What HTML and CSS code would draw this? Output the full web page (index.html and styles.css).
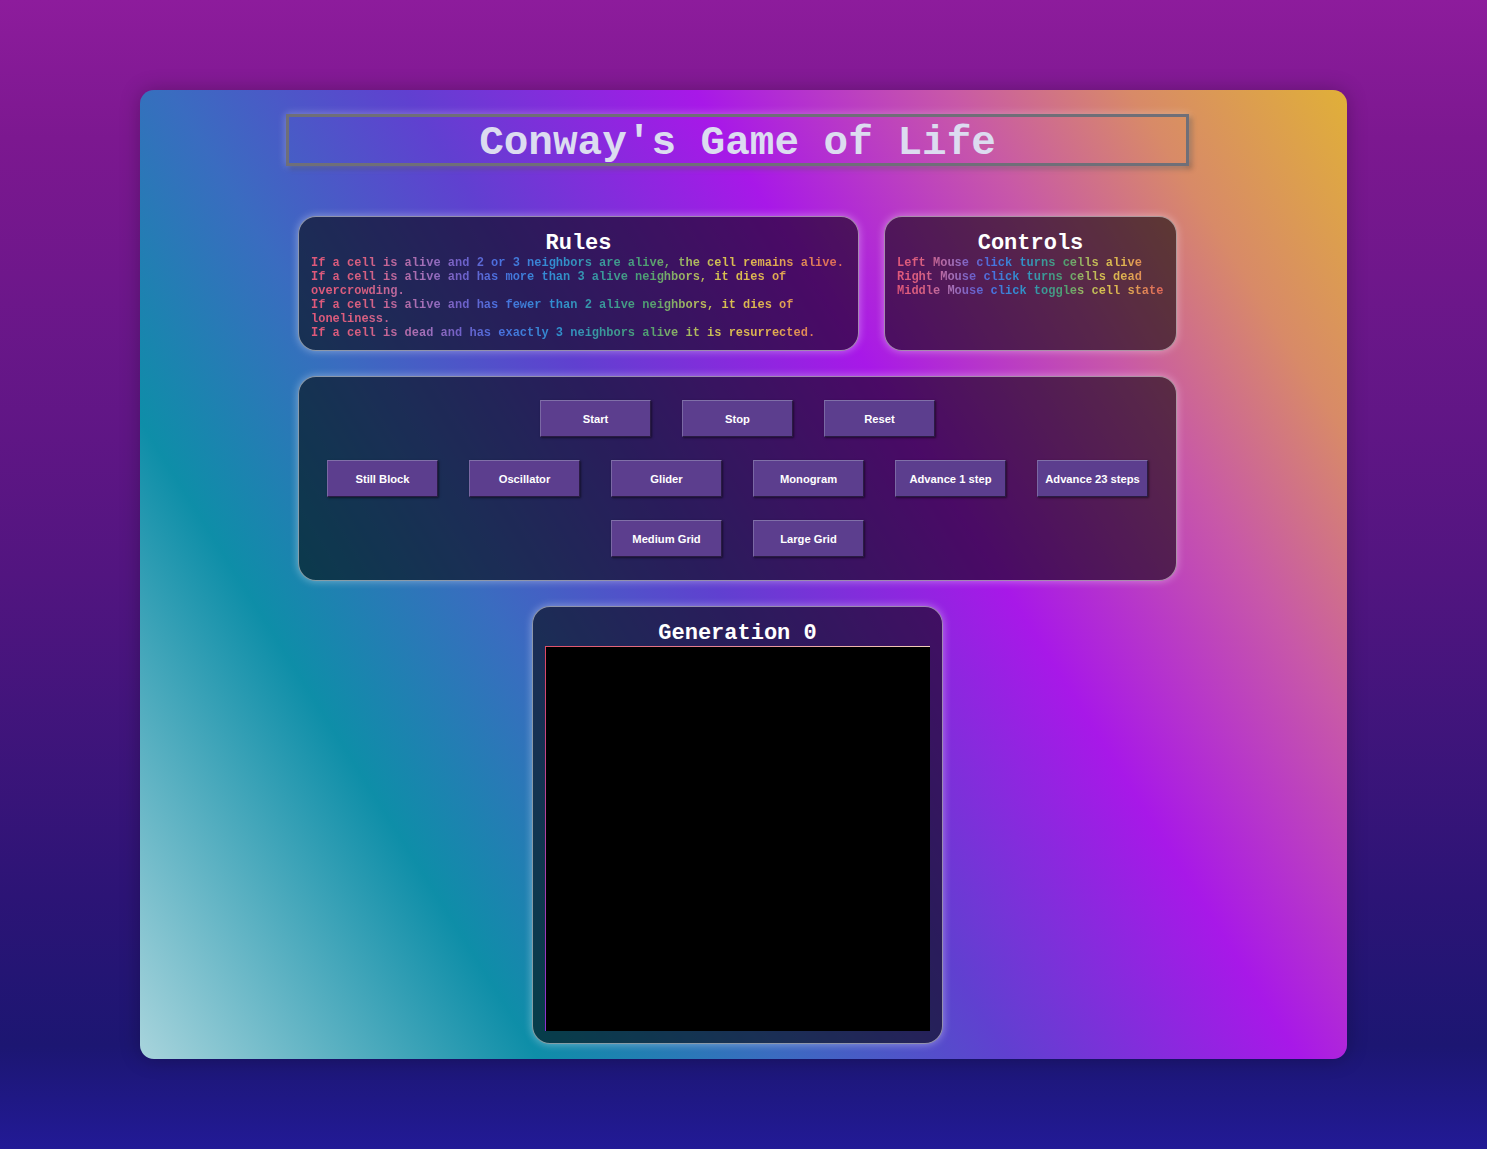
FILE: index.html
```html
<!DOCTYPE html>
<html lang="en">
<head>
<meta charset="utf-8">
<title>Conway's Game of Life</title>
<link rel="stylesheet" href="styles.css">
</head>
<body>
<main class="app">
  <h1 class="title">Conway's Game of Life</h1>

  <section class="info-row">
    <div class="card rules">
      <h2 class="card-title">Rules</h2>
      <p class="rainbow">If a cell is alive and 2 or 3 neighbors are alive, the cell remains alive.</p>
      <p class="rainbow">If a cell is alive and has more than 3 alive neighbors, it dies of overcrowding.</p>
      <p class="rainbow">If a cell is alive and has fewer than 2 alive neighbors, it dies of loneliness.</p>
      <p class="rainbow">If a cell is dead and has exactly 3 neighbors alive it is resurrected.</p>
    </div>
    <div class="card controls">
      <h2 class="card-title">Controls</h2>
      <p class="rainbow">Left Mouse click turns cells alive</p>
      <p class="rainbow">Right Mouse click turns cells dead</p>
      <p class="rainbow">Middle Mouse click toggles cell state</p>
    </div>
  </section>

  <section class="card panel">
    <div class="btn-row">
      <button class="btn">Start</button>
      <button class="btn">Stop</button>
      <button class="btn">Reset</button>
    </div>
    <div class="btn-row">
      <button class="btn">Still Block</button>
      <button class="btn">Oscillator</button>
      <button class="btn">Glider</button>
      <button class="btn">Monogram</button>
      <button class="btn">Advance 1 step</button>
      <button class="btn">Advance 23 steps</button>
    </div>
    <div class="btn-row">
      <button class="btn">Medium Grid</button>
      <button class="btn">Large Grid</button>
    </div>
  </section>

  <section class="card board">
    <h2 class="card-title">Generation 0</h2>
    <div class="canvas"></div>
  </section>
</main>
</body>
</html>
```

FILE: styles.css
```css
html, body {
  margin: 0;
  padding: 0;
}

body {
  min-height: 1149px;
  background: linear-gradient(180deg, #8d1c9c 0%, #7c1890 12%, #521580 50%, #2c1476 78%, #1c1672 91%, #221a96 100%);
  display: flex;
  justify-content: center;
  align-items: flex-start;
  font-family: "Liberation Mono", "Courier New", monospace;
}

.app {
  width: 1207px;
  height: 969px;
  margin-top: 90px;
  box-sizing: border-box;
  border-radius: 14px;
  background: linear-gradient(58deg, #a8d4dc 0%, #0e8ea8 22%, #3a6cc0 35%, #6040d0 48%, #a818e8 64%, #c858a8 78%, #d88a68 88%, #e0b038 100%);
  box-shadow: 0 0 20px rgba(0, 0, 0, 0.25);
  padding: 24px 12px 0 0;
  display: flex;
  flex-direction: column;
  align-items: center;
}

.title {
  width: 903px;
  height: 52px;
  box-sizing: border-box;
  margin: 0;
  padding-top: 3px;
  border: 3px solid #6f6f78;
  font-family: "Liberation Mono", "Courier New", monospace;
  font-weight: bold;
  font-size: 41px;
  line-height: 46px;
  text-align: center;
  color: #dcdcf0;
  box-shadow: 0 0 8px rgba(255, 255, 255, 0.35), 3px 3px 5px rgba(0, 0, 0, 0.3);
}

.info-row {
  margin-top: 50px;
  width: 879px;
  display: flex;
  gap: 25px;
}

.card {
  box-sizing: border-box;
  border: 1px solid rgba(255, 255, 255, 0.5);
  border-radius: 18px;
  background: rgba(0, 0, 0, 0.56);
  box-shadow: 0 0 8px rgba(255, 255, 255, 0.4);
  padding: 12px 12px 10px;
}

.rules {
  width: 561px;
}

.controls {
  width: 293px;
}

.card-title {
  margin: 0;
  padding-top: 2px;
  font-family: "Liberation Mono", "Courier New", monospace;
  font-weight: bold;
  font-size: 22px;
  line-height: 25px;
  color: #ffffff;
  text-align: center;
}

.rainbow {
  margin: 0;
  font-family: "Liberation Mono", "Courier New", monospace;
  font-weight: bold;
  font-size: 12px;
  line-height: 14px;
  background: linear-gradient(90deg, #e0587a 0%, #d86080 10%, #a470b8 21%, #7060c8 28%, #4a70e0 35%, #3090d0 46%, #3a9a98 55%, #50a070 63%, #a8b860 71%, #d8c050 77%, #e0b050 86%, #e07858 95%, #e06858 100%);
  -webkit-background-clip: text;
  background-clip: text;
  color: transparent;
}

.panel {
  margin-top: 25px;
  width: 879px;
  padding: 23px 0;
  display: flex;
  flex-direction: column;
  align-items: center;
  gap: 23px;
}

.btn-row {
  display: flex;
  justify-content: center;
  gap: 31px;
}

.btn {
  width: 111px;
  height: 37px;
  box-sizing: border-box;
  padding: 0;
  background: #5c3e8e;
  color: #ffffff;
  font-family: "Liberation Sans", Arial, sans-serif;
  font-weight: bold;
  font-size: 11.2px;
  border: 1px solid;
  border-color: #8070a8 #2a1c44 #2a1c44 #7a68a4;
  box-shadow: 1px 1px 2px rgba(0, 0, 0, 0.5);
}

.board {
  margin-top: 25px;
  width: 411px;
  padding: 12px 12px 12px;
}

.canvas {
  width: 385px;
  height: 385px;
  background:
    linear-gradient(90deg, #e05068, #e88a98 50%, #f4d0b8) 0 0 / 100% 1px no-repeat,
    linear-gradient(180deg, #e04860, #b040a0 50%, #8a30d0) 0 0 / 1px 100% no-repeat,
    #000000;
}
```
